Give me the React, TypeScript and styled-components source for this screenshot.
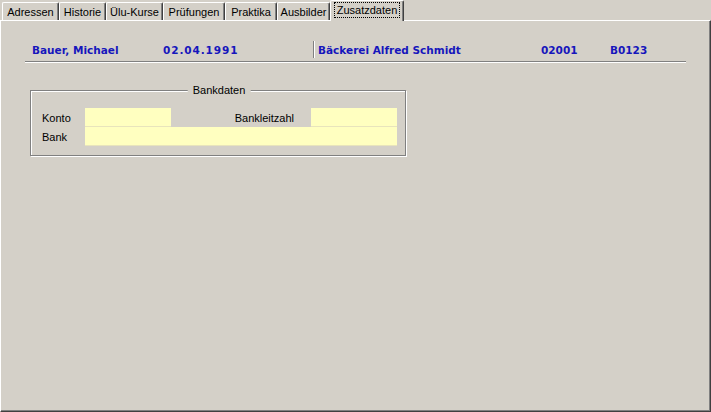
import React from "react";
import styled, { createGlobalStyle } from "styled-components";

const Global = createGlobalStyle`
  html, body { margin: 0; padding: 0; background: #d4d0c8; }
  body { font-family: "Liberation Sans", Arial, sans-serif; font-size: 11px; color: #000; }
  * { box-sizing: border-box; }
`;

const Window = styled.div`
  width: 711px;
  height: 412px;
  display: flex;
  flex-direction: column;
  background: #d4d0c8;
  overflow: hidden;
`;

const TabStrip = styled.div`
  display: flex;
  align-items: flex-end;
  height: 20px;
  padding-left: 2px;
  position: relative;
  z-index: 2;
`;

const Tab = styled.div<{ $w: number; $active?: boolean }>`
  width: ${(p) => p.$w}px;
  height: ${(p) => (p.$active ? 21 : 18)}px;
  margin-bottom: ${(p) => (p.$active ? -1 : 0)}px;
  background: #d4d0c8;
  border-top: 1px solid #fff;
  border-left: 1px solid #fff;
  border-right: 1px solid #404040;
  box-shadow: inset -1px 0 0 #808080;
  border-radius: 2px 2px 0 0;
  display: flex;
  align-items: center;
  justify-content: center;
  padding-bottom: ${(p) => (p.$active ? 2 : 0)}px;
  white-space: nowrap;
`;

const TabLabel = styled.span<{ $focus?: boolean }>`
  padding: 0 2px;
  line-height: 14px;
  border: 1px dotted ${(p) => (p.$focus ? "#000" : "transparent")};
`;

const Panel = styled.div`
  flex: 1;
  border-top: 1px solid #fff;
  border-left: 1px solid #fff;
  border-right: 1px solid #404040;
  border-bottom: 1px solid #404040;
  box-shadow: inset -1px -1px 0 #808080;
  padding: 19px 24px 0 24px;
  display: flex;
  flex-direction: column;
`;

const Header = styled.div`
  display: grid;
  grid-template-columns: 131px 150px 228px 69px auto;
  align-items: center;
  padding-left: 7px;
  border-bottom: 1px solid #808080;
  box-shadow: 0 1px 0 #fff;
  padding-bottom: 2px;
  height: 22px;
`;

const HeadCell = styled.div<{ $sep?: boolean; $spacing?: number }>`
  color: #1616bc;
  font-family: "DejaVu Sans", Verdana, sans-serif;
  font-weight: bold;
  font-size: 10.5px;
  letter-spacing: ${(p) => p.$spacing ?? 0}px;
  white-space: nowrap;
  height: 17px;
  line-height: 18px;
  padding-left: ${(p) => (p.$sep ? 4 : 0)}px;
  border-left: ${(p) => (p.$sep ? "1px solid #808080" : "none")};
  box-shadow: ${(p) => (p.$sep ? "inset 1px 0 0 #fff" : "none")};
`;

const GroupBox = styled.div`
  position: relative;
  margin: 28px 0 0 5px;
  width: 376px;
  border: 1px solid #808080;
  box-shadow: inset 1px 1px 0 #fff, 1px 1px 0 #fff;
  padding: 17px 8px 9px 11px;
`;

const Legend = styled.span`
  position: absolute;
  top: -8px;
  left: calc(50% + 1px);
  transform: translateX(-50%);
  background: #d4d0c8;
  padding: 0 5px;
  line-height: 14px;
`;

const FormGrid = styled.div`
  display: grid;
  grid-template-columns: 43px 86px 1fr 86px;
  grid-auto-rows: 19px;
`;

const Label = styled.div<{ $right?: boolean }>`
  display: flex;
  align-items: center;
  justify-content: ${(p) => (p.$right ? "flex-end" : "flex-start")};
  padding-right: ${(p) => (p.$right ? 17 : 0)}px;
  padding-top: 1px;
`;

const Field = styled.div<{ $span?: number }>`
  background: #ffffc0;
  grid-column: ${(p) => (p.$span ? `span ${p.$span}` : "auto")};
  border-bottom: 1px solid #e8e4bc;
`;

const tabs: { label: string; w: number; active?: boolean }[] = [
  { label: "Adressen", w: 57 },
  { label: "Historie", w: 47 },
  { label: "Ülu-Kurse", w: 57 },
  { label: "Prüfungen", w: 62 },
  { label: "Praktika", w: 52 },
  { label: "Ausbilder", w: 53 },
  { label: "Zusatzdaten", w: 74, active: true },
];

export default function App() {
  return (
    <Window>
      <Global />
      <TabStrip>
        {tabs.map((t) => (
          <Tab key={t.label} $w={t.w} $active={t.active}>
            <TabLabel $focus={t.active}>{t.label}</TabLabel>
          </Tab>
        ))}
      </TabStrip>
      <Panel>
        <Header>
          <HeadCell>Bauer, Michael</HeadCell>
          <HeadCell $spacing={0.9}>02.04.1991</HeadCell>
          <HeadCell $sep>Bäckerei Alfred Schmidt</HeadCell>
          <HeadCell>02001</HeadCell>
          <HeadCell>B0123</HeadCell>
        </Header>
        <GroupBox>
          <Legend>Bankdaten</Legend>
          <FormGrid>
            <Label>Konto</Label>
            <Field />
            <Label $right>Bankleitzahl</Label>
            <Field />
            <Label>Bank</Label>
            <Field $span={3} />
          </FormGrid>
        </GroupBox>
      </Panel>
    </Window>
  );
}
